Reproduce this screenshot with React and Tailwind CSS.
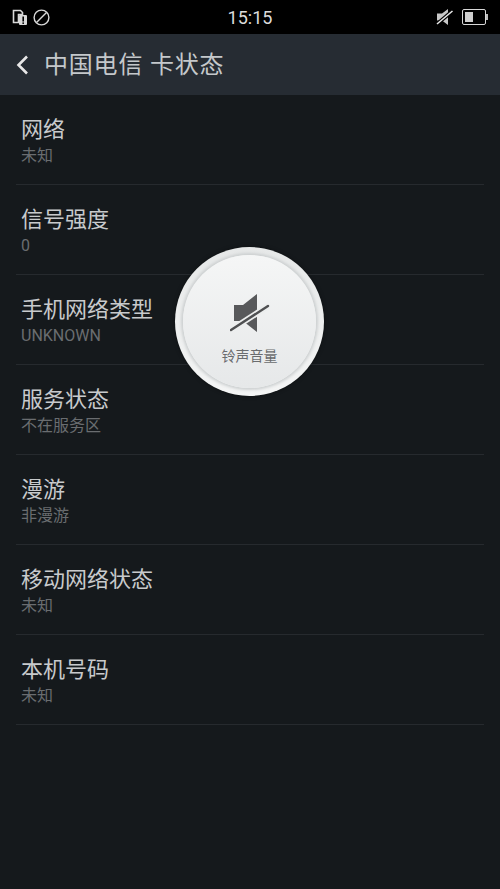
const rows = [
  ["网络", "未知"],
  ["信号强度", "0"],
  ["手机网络类型", "UNKNOWN"],
  ["服务状态", "不在服务区"],
  ["漫游", "非漫游"],
  ["移动网络状态", "未知"],
  ["本机号码", "未知"],
];

const font = { fontFamily: '"Roboto","Noto Sans CJK SC",sans-serif' };

export default function App() {
  return (
    <div className="relative w-[500px] h-[889px] bg-[#15191c] overflow-hidden" style={font}>
      <div className="h-[34px] bg-black flex items-center justify-between pl-[12px] pr-[12px] relative">
        <div className="flex items-center gap-[5px]">
          <svg width="16" height="16" viewBox="0 0 16 16">
            <path d="M1.5 1.5h7l2 2v2H6.5v8h-5z" fill="none" stroke="#d8d8d8" strokeWidth="1.6" />
            <rect x="7" y="6" width="8" height="10" rx="1" fill="#d8d8d8" />
            <rect x="10.4" y="7.5" width="1.6" height="5" fill="#000" />
            <rect x="10.4" y="13.4" width="1.6" height="1.5" fill="#000" />
          </svg>
          <svg width="17" height="17" viewBox="0 0 17 17" fill="none" stroke="#d8d8d8" strokeWidth="1.4">
            <circle cx="8.5" cy="8.5" r="7.4" />
            <path d="M3.5 13.5 13.5 3.5" />
          </svg>
        </div>
        <div className="absolute left-0 right-0 top-[7px] text-center text-[18px] leading-[22px] text-[#dcdcdc] pointer-events-none">15:15</div>
        <div className="flex items-center gap-[9px]">
          <svg width="17" height="18" viewBox="0 0 17 18">
            <path d="M1 5.5h5L12 1v16L6 12.5H1z" fill="#c8c8c8" />
            <path d="M1 16 16.5 3" stroke="#000" strokeWidth="3.6" />
            <path d="M1 16 16.5 3" stroke="#e8e8e8" strokeWidth="1.6" />
          </svg>
          <div className="flex items-center">
            <div className="w-[24px] h-[16px] rounded-[2px] border border-[#d8d8d8] p-[2px] flex">
              <div className="w-[8px] bg-[#cfcfcf]" />
            </div>
            <div className="w-[2px] h-[6px] bg-[#bdbdbd]" />
          </div>
        </div>
      </div>

      <div className="h-[61px] bg-[#262c33] flex items-center pl-[16px]">
        <svg width="13" height="20" viewBox="0 0 13 20" fill="none" stroke="#e8e8e8" strokeWidth="2.6">
          <path d="M11 1.5 2.5 10l8.5 8.5" />
        </svg>
        <div className="ml-[16px] text-[24px] leading-none text-[#c4c8cb] tracking-[0.8px] -translate-x-[1px]">中国电信 卡状态</div>
      </div>

      <div className="px-[16px]">
        {rows.map(([title, sub]) => (
          <div key={title} className="h-[90px] border-b border-[#262a2e] pl-[5px] pt-[21px]">
            <div className="text-[22px] leading-[28px] text-[#c8cacc]">{title}</div>
            <div className="text-[16px] leading-[24px] text-[#6a6d70]">{sub}</div>
          </div>
        ))}
      </div>

      <div className="absolute left-[175px] top-[247px] w-[149px] h-[149px] rounded-full bg-gradient-to-b from-[#e6e8e8] to-[#f4f5f5] flex items-center justify-center shadow-[0_0_4px_rgba(0,0,0,0.4)]">
        <div className="w-[133px] h-[133px] rounded-full bg-gradient-to-b from-[#f5f6f6] to-[#e6e8e9] shadow-[0_0_3px_2px_#cdd0d1] flex flex-col items-center">
          <svg className="mt-[37px]" width="40" height="42" viewBox="0 0 40 42">
            <path d="M4 13h9L27 2v38L13 29H4z" fill="#58595b" />
            <path d="M1 38 38 14" stroke="#eceeee" strokeWidth="6" />
            <path d="M1 38 38 14" stroke="#4f5052" strokeWidth="2.4" strokeLinecap="round" />
          </svg>
          <div className="mt-[13px] text-[14px] leading-[18px] text-[#6a6c6e]">铃声音量</div>
        </div>
      </div>
    </div>
  );
}
